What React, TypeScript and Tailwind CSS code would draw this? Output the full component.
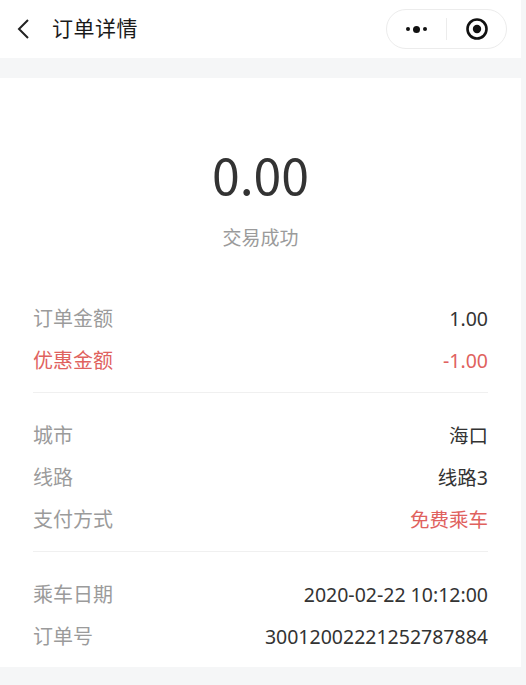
import React from "react";

type Row = { label: string; value: string; red?: boolean; redLabel?: boolean };

const groups: Row[][] = [
  [
    { label: "订单金额", value: "1.00" },
    { label: "优惠金额", value: "-1.00", red: true, redLabel: true },
  ],
  [
    { label: "城市", value: "海口" },
    { label: "线路", value: "线路3" },
    { label: "支付方式", value: "免费乘车", red: true },
  ],
  [
    { label: "乘车日期", value: "2020-02-22 10:12:00" },
    { label: "订单号", value: "30012002221252787884" },
  ],
];

function Capsule() {
  return (
    <div className="flex items-center h-[40px] w-[121px] rounded-full border border-[#ececec] bg-white">
      <div className="flex-1 flex items-center justify-center gap-[3px]">
        <span className="w-[4px] h-[4px] rounded-full bg-[#111]" />
        <span className="w-[7px] h-[7px] rounded-full bg-[#111]" />
        <span className="w-[4px] h-[4px] rounded-full bg-[#111]" />
      </div>
      <div className="w-px h-[22px] bg-[#ececec]" />
      <div className="flex-1 flex items-center justify-center">
        <svg width="24" height="24" viewBox="0 0 24 24">
          <circle cx="12" cy="12" r="9.5" fill="none" stroke="#111" strokeWidth="2.6" />
          <circle cx="12" cy="12" r="4.2" fill="#111" />
        </svg>
      </div>
    </div>
  );
}

export default function App() {
  return (
    <div
      className="min-h-[685px] bg-[#f5f6f7] pr-[5px]"
      style={{ fontFamily: '"Noto Sans", "Noto Sans CJK SC", sans-serif' }}
    >
      {/* Nav bar */}
      <div className="h-[58px] bg-white flex items-center pl-[16px] pr-[14px]">
        <svg width="16" height="24" viewBox="0 0 16 24" className="mr-[20px]">
          <path d="M12 3 L3 12 L12 21" fill="none" stroke="#222" strokeWidth="2" />
        </svg>
        <span className="text-[21px] text-[#1a1a1a] tracking-[0.5px]">订单详情</span>
        <div className="ml-auto">
          <Capsule />
        </div>
      </div>

      <div className="h-[20px]" />

      {/* Card */}
      <div className="bg-white px-[33px] pt-[70px] pb-[9px]">
        <div className="flex flex-col items-center">
          <div
            className="text-[50px] leading-none text-[#333]"
            style={{ fontFamily: '"Noto Sans CJK SC", sans-serif' }}
          >
            0.00
          </div>
          <div className="mt-[26px] text-[19px] leading-[28px] text-[#9b9b9b]">交易成功</div>
        </div>

        <div className="mt-[46px]">
          {groups.map((g, gi) => (
            <div
              key={gi}
              className={gi < groups.length - 1 ? "border-b border-[#f0f0f0] pb-[10px] mb-[22px]" : ""}
            >
              {g.map((r) => (
                <div key={r.label} className="flex items-center justify-between h-[42px]">
                  <span className={`text-[20px] ${r.redLabel ? "text-[#e0625e]" : "text-[#9b9b9b]"}`}>
                    {r.label}
                  </span>
                  <span className={`text-[19.5px] ${r.red ? "text-[#e0625e]" : "text-[#333]"}`}>
                    {r.value}
                  </span>
                </div>
              ))}
            </div>
          ))}
        </div>
      </div>
    </div>
  );
}
